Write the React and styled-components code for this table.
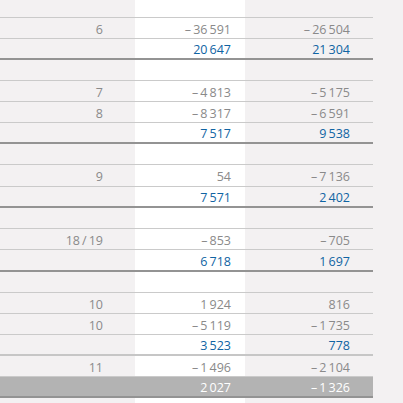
import React from "react";
import styled, { createGlobalStyle } from "styled-components";

const Global = createGlobalStyle`
  html, body { margin: 0; padding: 0; background: #f3f1f2; }
  body { font-family: "Open Sans", "Noto Sans", sans-serif; }
`;

const Page = styled.div`
  width: 403px;
  height: 403px;
  overflow: hidden;
  display: grid;
  grid-template-columns: 373px 30px;
  background: #f3f1f2;
`;

const Table = styled.div`
  display: flex;
  flex-direction: column;
`;

const Row = styled.div`
  display: grid;
  grid-template-columns: 135px 110px 128px;
  height: ${(p) => p.$h}px;
  box-sizing: border-box;
  border-bottom: ${(p) =>
    p.$line === "dark"
      ? "2px solid #939393"
      : p.$line === "mid"
      ? "2px solid #c6c6c6"
      : "1px solid #cacaca"};
  background: ${(p) => (p.$bar ? "#b3b3b3" : "transparent")};
`;

const Cell = styled.div`
  display: flex;
  align-items: center;
  justify-content: flex-end;
  padding-top: 4px;
  padding-right: ${(p) => p.$pr}px;
  font-size: 12.5px;
  line-height: 1;
  white-space: pre;
  color: ${(p) => (p.$bar ? "#ffffff" : p.$blue ? "#0f64a3" : "#8a8a8a")};
  background: ${(p) => (p.$white && !p.$bar ? "#ffffff" : "transparent")};
`;

const Filler = styled.div`
  flex: 1;
  display: grid;
  grid-template-columns: 135px 110px 128px;
`;

const WhiteStripe = styled.div`
  grid-column: 2;
  background: #ffffff;
`;

const T = "\u2009";
const n = (s) => s.replace(/ /g, T).replace(/^-/, "–" + T);

const rows = [
  { h: 18 },
  { note: "6", a: "-36 591", b: "-26 504" },
  { a: "20 647", b: "21 304", blue: true, line: "dark" },
  {},
  { note: "7", a: "-4 813", b: "-5 175" },
  { note: "8", a: "-8 317", b: "-6 591" },
  { a: "7 517", b: "9 538", blue: true, line: "dark" },
  {},
  { note: "9", a: "54", b: "-7 136", h: 22 },
  { a: "7 571", b: "2 402", blue: true, line: "dark" },
  {},
  { note: "18 / 19", a: "-853", b: "-705" },
  { a: "6 718", b: "1 697", blue: true, line: "dark", h: 22 },
  {},
  { note: "10", a: "1 924", b: "816" },
  { note: "10", a: "-5 119", b: "-1 735" },
  { a: "3 523", b: "778", blue: true, line: "mid" },
  { note: "11", a: "-1 496", b: "-2 104" },
  { a: "2 027", b: "-1 326", bar: true, line: "dark" },
];

export default function App() {
  return (
    <>
      <Global />
      <Page>
        <Table>
          {rows.map((r, i) => (
            <Row key={i} $h={r.h || 21} $line={r.line} $bar={r.bar}>
              <Cell $pr={32} $bar={r.bar}>
                {r.note ? r.note.replace(/ /g, T) : ""}
              </Cell>
              <Cell $pr={14} $white $blue={r.blue} $bar={r.bar}>
                {r.a ? n(r.a) : ""}
              </Cell>
              <Cell $pr={23} $blue={r.blue} $bar={r.bar}>
                {r.b ? n(r.b) : ""}
              </Cell>
            </Row>
          ))}
          <Filler>
            <WhiteStripe />
          </Filler>
        </Table>
      </Page>
    </>
  );
}
